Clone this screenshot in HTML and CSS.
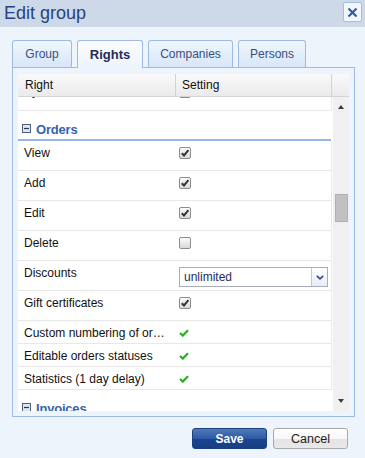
FILE: index.html
```html
<!DOCTYPE html>
<html>
<head>
<meta charset="utf-8">
<link rel="stylesheet" href="styles.css">
</head>
<body>
<div class="titlebar">
  <span class="title">Edit group</span>
  <span class="close"><svg width="11" height="11" viewBox="0 0 11 11"><path d="M1.5 1.5 L9.5 9.5 M9.5 1.5 L1.5 9.5" stroke="#2f5ca5" stroke-width="2.2" fill="none"/></svg></span>
</div>
<div class="content">
  <div class="tabs">
    <div class="tab tab-group">Group</div>
    <div class="tab tab-rights active">Rights</div>
    <div class="tab tab-companies">Companies</div>
    <div class="tab tab-persons">Persons</div>
  </div>
  <div class="panel">
    <div class="grid">
      <div class="grid-head">
        <div class="hc hc1">Right</div>
        <div class="hc hc2">Setting</div>
        <div class="hc hc3"></div>
      </div>
      <div class="grid-body">
        <div class="rows">
          <div class="rows-inner">
            <div class="row partial"><div class="c1">By status</div><div class="c2"><span class="cb checked"><svg width="10" height="10" viewBox="0 0 10 10"><path d="M1.8 5.2 L4 7.4 L8.4 2.2" stroke="#333" stroke-width="2" fill="none"/></svg></span></div></div>
            <div class="section"><span class="minus"><svg width="9" height="9" viewBox="0 0 9 9"><rect x="0.5" y="0.5" width="8" height="8" fill="#dfe6f0" stroke="#4f5e7c"/><path d="M2 4.5 H7" stroke="#2b3650" stroke-width="1.2"/></svg></span><span class="sec-title">Orders</span></div>
            <div class="row"><div class="c1">View</div><div class="c2"><span class="cb checked"><svg width="10" height="10" viewBox="0 0 10 10"><path d="M1.8 5.2 L4 7.4 L8.4 2.2" stroke="#333" stroke-width="2" fill="none"/></svg></span></div></div>
            <div class="row"><div class="c1">Add</div><div class="c2"><span class="cb checked"><svg width="10" height="10" viewBox="0 0 10 10"><path d="M1.8 5.2 L4 7.4 L8.4 2.2" stroke="#333" stroke-width="2" fill="none"/></svg></span></div></div>
            <div class="row"><div class="c1">Edit</div><div class="c2"><span class="cb checked"><svg width="10" height="10" viewBox="0 0 10 10"><path d="M1.8 5.2 L4 7.4 L8.4 2.2" stroke="#333" stroke-width="2" fill="none"/></svg></span></div></div>
            <div class="row"><div class="c1">Delete</div><div class="c2"><span class="cb"></span></div></div>
            <div class="row"><div class="c1">Discounts</div><div class="c2"><div class="select"><span class="sel-text">unlimited</span><span class="sel-btn"><svg width="8" height="5" viewBox="0 0 8 5"><path d="M0.8 0.8 L4 3.8 L7.2 0.8" stroke="#2d4c8a" stroke-width="1.6" fill="none"/></svg></span></div></div></div>
            <div class="row"><div class="c1">Gift certificates</div><div class="c2"><span class="cb checked"><svg width="10" height="10" viewBox="0 0 10 10"><path d="M1.8 5.2 L4 7.4 L8.4 2.2" stroke="#333" stroke-width="2" fill="none"/></svg></span></div></div>
            <div class="row short"><div class="c1">Custom numbering of orders</div><div class="c2"><span class="ok"><svg width="10" height="8" viewBox="0 0 10 8"><path d="M1 4 L3.8 6.6 L9 1.2" stroke="#25b025" stroke-width="2.2" fill="none"/></svg></span></div></div>
            <div class="row short"><div class="c1">Editable orders statuses</div><div class="c2"><span class="ok"><svg width="10" height="8" viewBox="0 0 10 8"><path d="M1 4 L3.8 6.6 L9 1.2" stroke="#25b025" stroke-width="2.2" fill="none"/></svg></span></div></div>
            <div class="row short"><div class="c1">Statistics (1 day delay)</div><div class="c2"><span class="ok"><svg width="10" height="8" viewBox="0 0 10 8"><path d="M1 4 L3.8 6.6 L9 1.2" stroke="#25b025" stroke-width="2.2" fill="none"/></svg></span></div></div>
            <div class="section"><span class="minus"><svg width="9" height="9" viewBox="0 0 9 9"><rect x="0.5" y="0.5" width="8" height="8" fill="#dfe6f0" stroke="#4f5e7c"/><path d="M2 4.5 H7" stroke="#2b3650" stroke-width="1.2"/></svg></span><span class="sec-title">Invoices</span></div>
          </div>
        </div>
        <div class="vscroll">
          <span class="arrow up"></span>
          <span class="thumb"></span>
          <span class="arrow down"></span>
        </div>
      </div>
    </div>
  </div>
  <div class="buttons">
    <button class="btn save">Save</button>
    <button class="btn cancel">Cancel</button>
  </div>
</div>
</body>
</html>
```
FILE: styles.css
```css
* { box-sizing: border-box; }
body {
  margin: 0;
  background: #eef4fc;
  font-family: "Liberation Sans", Arial, sans-serif;
  font-size: 12px;
  color: #111;
}
.titlebar {
  height: 27px;
  background: #cdd9e8;
  display: flex;
  align-items: flex-start;
  justify-content: space-between;
  padding: 0 3px 0 4px;
}
.title {
  font-size: 18px;
  line-height: 27px;
  color: #27427c;
}
.close {
  margin-top: 2px;
  width: 19px;
  height: 20px;
  border: 1px solid #a3bde3;
  border-radius: 2px;
  background: #f2f7fd;
  display: flex;
  align-items: center;
  justify-content: center;
}
.content {
  padding: 13px 10px 0 12px;
}
.tabs {
  display: flex;
  gap: 5px;
  height: 27px;
}
.tab {
  height: 27px;
  border: 1px solid #9dbae3;
  border-bottom: none;
  border-radius: 3px 3px 0 0;
  background: linear-gradient(#f0f6fd, #d7e6f8);
  color: #3b4f7c;
  display: flex;
  align-items: center;
  justify-content: center;
  font-size: 12px;
}
.tab-group { width: 60px; }
.tab-rights { width: 66px; }
.tab-companies { width: 85px; }
.tab-persons { width: 68px; }
.tab.active {
  position: relative;
  z-index: 2;
  height: 28px;
  background: linear-gradient(#fafcff, #eef4fc);
  font-weight: bold;
  font-size: 13px;
  color: #1f2e5a;
}
.panel {
  height: 350px;
  border: 1px solid #9dbae3;
  background: #eef4fc;
  padding: 6px 5px 5px 5px;
}
.grid {
  height: 337px;
  display: flex;
  flex-direction: column;
}
.grid-head {
  height: 23px;
  display: flex;
  background: linear-gradient(#f9f9f9, #eaeaea);
  border-bottom: 1px solid #d4d4d4;
}
.hc {
  line-height: 22px;
  font-size: 12px;
  color: #111;
}
.hc1 { width: 158px; padding-left: 7px; border-right: 1px solid #d2d2d2; }
.hc2 { width: 156px; padding-left: 6px; border-right: 1px solid #d2d2d2; }
.hc3 { flex: 1; }
.grid-body {
  height: 314px;
  display: flex;
}
.rows {
  flex: 1;
  background: #fff;
  overflow: hidden;
}
.rows-inner {
  margin-top: -16px;
}
.row {
  height: 30px;
  padding-top: 5px;
  margin-right: 1px;
  display: flex;
  line-height: 14px;
  border-bottom: 1px solid #e8e8e8;
  border-right: 1px solid #e8e8e8;
}
.row.partial { padding-top: 3px; }
.row.partial .cb { margin-top: 2px; }
.row.short { height: 23px; }
.c1 {
  width: 158px;
  padding: 0 6px;
  white-space: nowrap;
  overflow: hidden;
  text-overflow: ellipsis;
}
.c2 {
  padding-left: 3px;
}
.cb {
  display: block;
  margin-top: 1px;
  width: 12px;
  height: 12px;
  border: 1px solid #8c8c8c;
  border-radius: 2px;
  background: linear-gradient(#fbfbfb, #d8d8d8);
}
.cb svg { display: block; margin: 0; }
.ok { display: block; margin-top: 3px; }
.ok svg { display: block; }
.select {
  margin-top: 1px;
  width: 149px;
  height: 20px;
  border: 1px solid #a7adba;
  background: #fff;
  display: flex;
}
.sel-text {
  flex: 1;
  padding-left: 4px;
  line-height: 18px;
  color: #1f2b5e;
}
.sel-btn {
  width: 16px;
  border-left: 1px solid #c3c8d0;
  background: linear-gradient(#ffffff, #e8edf4);
  display: flex;
  align-items: center;
  justify-content: center;
}
.sel-btn svg { display: block; }
.section {
  height: 30px;
  margin-right: 2px;
  padding: 13px 0 0 4px;
  display: flex;
  align-items: flex-start;
  gap: 5px;
  border-bottom: 2px solid #94b5e6;
}
.minus svg { display: block; }
.sec-title {
  margin-top: -2px;
  font-weight: bold;
  font-size: 13px;
  line-height: 16px;
  letter-spacing: -0.2px;
  color: #3a62a8;
}
.vscroll {
  width: 16px;
  background: #f0f0f0;
  display: flex;
  flex-direction: column;
  align-items: center;
  padding: 8px 0;
}
.arrow {
  width: 0;
  height: 0;
  border-left: 3.5px solid transparent;
  border-right: 3.5px solid transparent;
}
.arrow.up { border-bottom: 4px solid #3c3c3c; }
.arrow.down { border-top: 4px solid #3c3c3c; margin-top: auto; }
.thumb {
  margin-top: 85px;
  width: 13px;
  height: 28px;
  background: #c1c1c1;
  border: 1px solid #b0b0b0;
}
.buttons {
  display: flex;
  justify-content: flex-end;
  gap: 6px;
  margin-top: 11px;
  margin-right: 7px;
}
.btn {
  width: 75px;
  height: 21px;
  border-radius: 3px;
  font-family: "Liberation Sans", Arial, sans-serif;
  font-size: 12px;
  padding: 0;
}
.save {
  border: 1px solid #1d4180;
  background: linear-gradient(#5079bd, #2d5aa2 50%, #1a458f 51%, #173f86);
  color: #fff;
  font-weight: bold;
}
.cancel {
  border: 1px solid #a9a9a9;
  background: linear-gradient(#ffffff, #f7f7f7 50%, #e4e4e4 51%, #e8e8e8);
  color: #222;
  font-size: 12.5px;
}
```
